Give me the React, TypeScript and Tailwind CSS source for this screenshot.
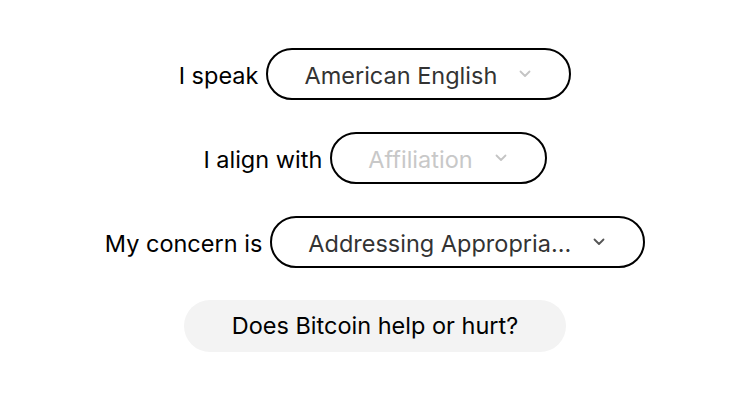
import React from 'react';

/* One "label + pill select" row. */
function PickerRow({ label, value, placeholder, dark }: { label: string; value: string; placeholder?: boolean; dark?: boolean }) {
  return (
    <div className="flex items-center gap-2">
      <span className="pt-[3px] text-[23.5px] text-black">{label}</span>
      <div className="flex h-[52px] items-center gap-[22px] rounded-full border-2 border-black pl-[36px] pr-[38px]">
        <span className={'whitespace-nowrap pt-[3px] text-[23.5px] ' + (placeholder ? 'text-[#c8c8c8]' : 'text-[#333333]')}>
          {value}
        </span>
        <svg width="12" height="8" viewBox="0 0 12 8" className={dark ? 'text-[#555555]' : 'text-[#c4c4c4]'}>
          <path d="M1.5 1.5 L6 6 L10.5 1.5" fill="none" stroke="currentColor" strokeWidth="1.8" strokeLinecap="round" strokeLinejoin="round" />
        </svg>
      </div>
    </div>
  );
}

export default function App() {
  return (
    <div className="flex h-[400px] w-full flex-col items-center justify-center gap-[32px] bg-white font-['Inter',sans-serif]">
      <PickerRow label="I speak" value="American English" />
      <PickerRow label="I align with" value="Affiliation" placeholder />
      <PickerRow label="My concern is" value="Addressing Appropria..." dark />
      <button className="h-[52px] rounded-full bg-[#f3f3f3] px-[48px] text-[23.5px] text-black">
        Does Bitcoin help or hurt?
      </button>
    </div>
  );
}
